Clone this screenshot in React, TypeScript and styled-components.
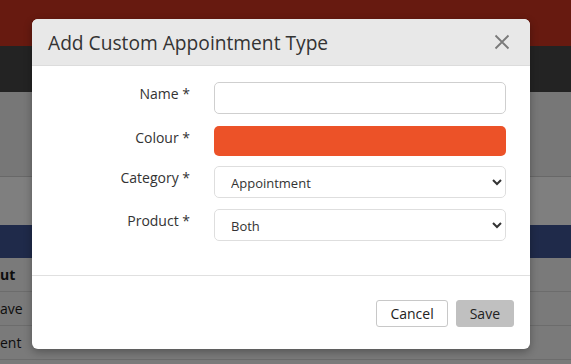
import React from 'react';
import styled, { createGlobalStyle } from 'styled-components';

const GlobalStyle = createGlobalStyle`
  html, body {
    margin: 0;
    padding: 0;
    width: 571px;
    height: 364px;
    overflow: hidden;
    font-family: 'Open Sans', 'Liberation Sans', sans-serif;
  }
`;

const Page = styled.div`
  position: relative;
  width: 571px;
  height: 364px;
  overflow: hidden;
  background: #7f7f7f;
  display: flex;
  flex-direction: column;
`;

const Band = styled.div<{ $h: number; $bg: string; $border?: string }>`
  height: ${(p) => p.$h}px;
  flex-shrink: 0;
  background: ${(p) => p.$bg};
  border-bottom: ${(p) => (p.$border ? `1px solid ${p.$border}` : 'none')};
`;

const Row = styled.div<{ $bold?: boolean }>`
  height: 33px;
  flex-shrink: 0;
  display: flex;
  align-items: center;
  border-bottom: 1px solid #6c6c6c;
  background: #7a7a7a;
  font-size: 14px;
  font-weight: ${(p) => (p.$bold ? 700 : 400)};
  color: #0d0d0d;
  white-space: nowrap;
`;

const Overlay = styled.div`
  position: absolute;
  inset: 0;
  display: flex;
  align-items: flex-start;
  justify-content: flex-start;
  padding: 19px 0 0 32px;
`;

const Modal = styled.div`
  width: 498px;
  height: 330px;
  background: #fff;
  border-radius: 6px;
  overflow: hidden;
  box-shadow: 0 3px 9px rgba(0, 0, 0, 0.3);
  display: flex;
  flex-direction: column;
`;

const Header = styled.div`
  height: 47px;
  box-sizing: border-box;
  background: #e8e8e8;
  border-bottom: 1px solid #dcdcdc;
  display: flex;
  align-items: center;
  justify-content: space-between;
  padding: 0 18px 0 16px;
`;

const Title = styled.h4`
  margin: 0;
  font-size: 19.2px;
  font-weight: 400;
  color: #333;
`;

const Close = styled.button`
  border: none;
  background: none;
  padding: 0;
  width: 20px;
  height: 20px;
  display: flex;
  align-items: center;
  justify-content: center;
  cursor: pointer;
`;

const Body = styled.div`
  height: 210px;
  box-sizing: border-box;
  padding: 16px 24px 0 0;
  border-bottom: 1px solid #e0e0e0;
  display: grid;
  grid-template-columns: 158px 292px;
  column-gap: 24px;
  align-content: start;
`;

const Label = styled.label<{ $mt: number }>`
  margin-top: ${(p) => p.$mt}px;
  text-align: right;
  font-size: 14px;
  color: #333;
  line-height: 20px;
  padding-top: 2px;
`;

const Field = styled.div<{ $mt: number }>`
  margin-top: ${(p) => p.$mt}px;
`;

const TextInput = styled.input`
  display: block;
  width: 100%;
  height: 32px;
  box-sizing: border-box;
  border: 1px solid #cfcfcf;
  border-radius: 5px;
  background: #fff;
  outline: none;
`;

const Swatch = styled.div<{ $color: string }>`
  height: 30px;
  border-radius: 5px;
  background: ${(p) => p.$color};
`;

const Select = styled.select`
  display: block;
  width: 100%;
  height: 32px;
  box-sizing: border-box;
  border: 1px solid #dedede;
  border-radius: 5px;
  background: #fff;
  padding: 2px 6px 0 12px;
  font-family: 'Open Sans', 'Liberation Sans', sans-serif;
  font-size: 13px;
  color: #333;
  outline: none;
`;

const Footer = styled.div`
  flex: 1;
  display: flex;
  justify-content: flex-end;
  align-items: flex-start;
  gap: 8px;
  padding: 24px 16px 0 0;
`;

const Button = styled.button<{ $primary?: boolean }>`
  height: 27px;
  box-sizing: border-box;
  padding: 0 13px;
  border-radius: 3px;
  border: 1px solid ${(p) => (p.$primary ? '#c0c0c0' : '#c8c8c8')};
  background: ${(p) => (p.$primary ? '#c0c0c0' : '#fff')};
  font-family: 'Open Sans', 'Liberation Sans', sans-serif;
  font-size: 14px;
  color: #222;
  cursor: pointer;
`;

const rows = [
  { label: 'Name *', mt: 0, kind: 'text' },
  { label: 'Colour *', mt: 12, kind: 'colour' },
  { label: 'Category *', mt: 10, kind: 'select', value: 'Appointment' },
  { label: 'Product *', mt: 11, kind: 'select', value: 'Both' },
];

export default function App() {
  return (
    <>
      <GlobalStyle />
      <Page>
        <Band $h={46} $bg="#671a10" />
        <Band $h={46} $bg="#232323" />
        <Band $h={84} $bg="#777777" $border="#686868" />
        <Band $h={48} $bg="#7f7f7f" />
        <Band $h={33} $bg="#1f2a4a" />
        <Row $bold>ut</Row>
        <Row>ave</Row>
        <Row>ent</Row>
        <Row />
        <Overlay>
          <Modal>
            <Header>
              <Title>Add Custom Appointment Type</Title>
              <Close aria-label="Close">
                <svg width="16" height="16" viewBox="0 0 16 16">
                  <path d="M1.5 1.5 L14.5 14.5 M14.5 1.5 L1.5 14.5" stroke="#7a7a7a" strokeWidth="1.8" />
                </svg>
              </Close>
            </Header>
            <Body>
              {rows.map((r) => (
                <React.Fragment key={r.label}>
                  <Label $mt={r.mt}>{r.label}</Label>
                  <Field $mt={r.mt}>
                    {r.kind === 'text' && <TextInput type="text" />}
                    {r.kind === 'colour' && <Swatch $color="#ec5228" />}
                    {r.kind === 'select' && (
                      <Select defaultValue={r.value}>
                        <option>{r.value}</option>
                      </Select>
                    )}
                  </Field>
                </React.Fragment>
              ))}
            </Body>
            <Footer>
              <Button>Cancel</Button>
              <Button $primary>Save</Button>
            </Footer>
          </Modal>
        </Overlay>
      </Page>
    </>
  );
}
